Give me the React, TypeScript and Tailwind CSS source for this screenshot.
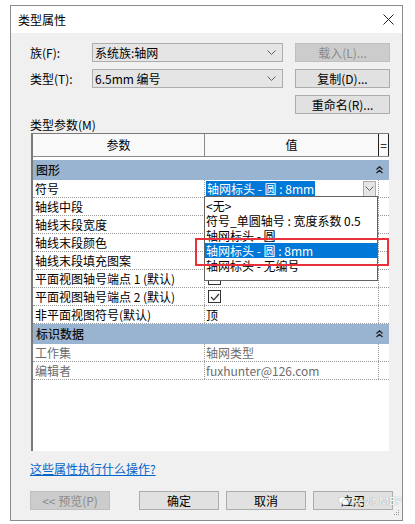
import React from 'react';

const cjk = "font-['Noto_Sans_CJK_SC','Noto_Sans',sans-serif]";

function ChevronDown() {
  return (
    <svg width="9" height="6" viewBox="0 0 9 6" className="text-[#606060]">
      <path d="M0.5 0.5 L4.5 4.5 L8.5 0.5" fill="none" stroke="currentColor" strokeWidth="1" />
    </svg>
  );
}

function DoubleUp() {
  return (
    <svg width="7" height="8" viewBox="0 0 7 8">
      <path d="M0.5 3.5 L3.5 0.8 L6.5 3.5 M0.5 7 L3.5 4.3 L6.5 7" fill="none" stroke="#222" strokeWidth="1.3" />
    </svg>
  );
}

function Combo({ text }: { text: string }) {
  return (
    <div className="w-[191px] h-[19px] bg-[#e5e5e5] border border-[#adadad] flex items-center justify-between pl-[2px] pr-[6px]">
      <span className="text-[12px] text-black leading-none">{text}</span>
      <ChevronDown />
    </div>
  );
}

function Btn({ label, disabled, w = 'w-[95px]' }: { label: string; disabled?: boolean; w?: string }) {
  return (
    <div
      className={`${w} h-[19px] flex items-center justify-center text-[12px] leading-none border ${
        disabled ? 'bg-[#cccccc] border-[#bfbfbf] text-[#8a8a8a]' : 'bg-[#e1e1e1] border-[#adadad] text-black'
      }`}
    >
      {label}
    </div>
  );
}

function Checkbox({ checked }: { checked?: boolean }) {
  return (
    <div className="w-[13px] h-[13px] border border-[#333] bg-white flex items-center justify-center">
      {checked && (
        <svg width="10" height="8" viewBox="0 0 10 8">
          <path d="M1 4 L3.8 6.8 L9 1" fill="none" stroke="#333" strokeWidth="1.2" />
        </svg>
      )}
    </div>
  );
}

function GroupRow({ label }: { label: string }) {
  return (
    <div className="h-[20px] bg-[#99b4d1] flex items-center justify-between pl-[3px] pr-[6px]">
      <span className="text-[12px] text-[#111] font-medium">{label}</span>
      <DoubleUp />
    </div>
  );
}

function Row({ label, children, muted }: { label: string; children?: React.ReactNode; muted?: boolean }) {
  return (
    <div className="h-[18px] flex border-b border-dotted border-[#9a9a9a] bg-white">
      <div className={`w-[172px] shrink-0 border-r border-dotted border-[#9a9a9a] pl-[2px] flex items-center text-[12px] ${muted ? 'text-[#6d6d6d]' : 'text-black'}`}>
        {label}
      </div>
      <div className={`w-[174px] shrink-0 border-r border-dotted border-[#9a9a9a] pl-[1px] flex items-center text-[12px] ${muted ? 'text-[#6d6d6d]' : 'text-black'}`}>
        {children}
      </div>
      <div className="flex-1" />
    </div>
  );
}

const listItems = ['<无>', '符号_单圆轴号 : 宽度系数 0.5', '轴网标头 - 圆', '轴网标头 - 圆 : 8mm', '轴网标头 - 无编号'];

export default function App() {
  return (
    <div className={`w-[415px] h-[524px] bg-white pl-[10px] pt-[5px] ${cjk}`}>
      <div className="w-[393px] h-[516px] border border-[#8c8c8c] bg-[#f0f0f0] flex flex-col relative">
        {/* Title */}
        <div className="h-[27px] bg-white flex items-center justify-between pl-[7px] pr-[8px]">
          <span className="text-[12px] text-black">类型属性</span>
          <svg width="11" height="11" viewBox="0 0 11 11">
            <path d="M0.5 0.5 L10.5 10.5 M10.5 0.5 L0.5 10.5" stroke="#222" strokeWidth="1" />
          </svg>
        </div>

        {/* Family / type */}
        <div className="pl-[19px] pt-[10px] flex flex-col gap-[7px]">
          <div className="flex items-center">
            <span className="w-[62px] text-[12px] text-black">族(F):</span>
            <Combo text="系统族:轴网" />
            <div className="ml-[12px]"><Btn label="载入(L)..." disabled /></div>
          </div>
          <div className="flex items-center">
            <span className="w-[62px] text-[12px] text-black">类型(T):</span>
            <Combo text="6.5mm 编号" />
            <div className="ml-[12px]"><Btn label="复制(D)..." /></div>
          </div>
          <div className="flex justify-end pr-[12px]">
            <Btn label="重命名(R)..." />
          </div>
        </div>

        <div className="pl-[19px] mt-[2px] text-[12px] text-black h-[17px] leading-[17px]">类型参数(M)</div>

        {/* Table */}
        <div className="ml-[20px] w-[358px] h-[318px] bg-white border-l-2 border-t border-[#7a7a7a] relative">
          <div className="h-[23px] flex border-b border-[#8a8a8a] bg-[#f9f9f9]">
            <div className="w-[172px] border-r border-[#8a8a8a] flex items-center justify-center text-[12px] text-black">参数</div>
            <div className="w-[174px] border-r border-[#222] flex items-center justify-center text-[12px] text-black">值</div>
            <div className="flex-1 border-r border-[#222] flex items-center justify-center text-[12px] text-black">=</div>
          </div>
          <div className="h-[3px]" />
          <GroupRow label="图形" />
          <Row label="符号">
            <div className="w-full flex items-center justify-between pr-[2px]">
              <span className="bg-[#0078d7] text-white px-[1px] leading-[16px]">轴网标头 - 圆 : 8mm</span>
              <div className="w-[13px] h-[16px] bg-[#e5e5e5] border border-[#adadad] flex items-center justify-center">
                <ChevronDown />
              </div>
            </div>
          </Row>
          <Row label="轴线中段" />
          <Row label="轴线末段宽度" />
          <Row label="轴线末段颜色" />
          <Row label="轴线末段填充图案" />
          <Row label="平面视图轴号端点 1 (默认)">
            <div className="pl-[2px]"><Checkbox /></div>
          </Row>
          <Row label="平面视图轴号端点 2 (默认)">
            <div className="pl-[2px]"><Checkbox checked /></div>
          </Row>
          <Row label="非平面视图符号(默认)">顶</Row>
          <GroupRow label="标识数据" />
          <Row label="工作集" muted>轴网类型</Row>
          <Row label="编辑者" muted>fuxhunter@126.com</Row>

          {/* Dropdown list */}
          <div className="absolute left-[171px] top-[62px] w-[174px] h-[85px] bg-white border border-[#646464] pt-[1px] flex flex-col">
            {listItems.map((it, i) => (
              <div
                key={it}
                className={`h-[15px] flex items-center pl-[1px] text-[12px] leading-none ${
                  i === 3 ? 'bg-[#0078d7] text-white' : 'text-black'
                }`}
              >
                {it}
              </div>
            ))}
          </div>

          {/* Red highlight */}
          <div className="absolute left-[162px] top-[104px] w-[194px] h-[28px] border-2 border-[#e8313a]" />
        </div>

        {/* Help link */}
        <div className="pl-[19px] mt-[11px] h-[14px] flex items-center">
          <span className="text-[12px] text-[#0066cc] underline leading-none">这些属性执行什么操作?</span>
        </div>

        {/* Buttons */}
        <div className="pl-[19px] mt-[15px] flex items-center">
          <Btn label="<< 预览(P)" disabled w="w-[80px]" />
          <div className="ml-[29px] flex gap-[7px]">
            <Btn label="确定" w="w-[80px]" />
            <Btn label="取消" w="w-[80px]" />
            <Btn label="应用" w="w-[80px]" />
          </div>
        </div>

        {/* Watermark */}
        <div className="absolute left-[327px] top-[489px] flex items-center gap-[2px] whitespace-nowrap pointer-events-none">
          <svg width="11" height="10" viewBox="0 0 11 10" className="shrink-0">
            <ellipse cx="4" cy="4" rx="3.6" ry="3.2" fill="#fff" stroke="#bbb" strokeWidth="0.6" />
            <ellipse cx="7.3" cy="6.2" rx="3.2" ry="2.8" fill="#fff" stroke="#bbb" strokeWidth="0.6" />
          </svg>
          <span className="text-[11px] leading-none text-white font-['Noto_Sans',sans-serif] [text-shadow:0_0_1px_#777]">Revit MEP</span>
        </div>

        {/* Resize grip */}
        <div className="absolute right-[3px] bottom-[3px] w-[7px] h-[7px] flex flex-col items-end gap-[1px]">
          <div className="w-[1px] h-[1px] bg-[#999]" />
          <div className="flex gap-[1px]"><div className="w-[1px] h-[1px] bg-[#999]" /><div className="w-[1px] h-[1px] bg-[#999]" /></div>
          <div className="flex gap-[1px]"><div className="w-[1px] h-[1px] bg-[#999]" /><div className="w-[1px] h-[1px] bg-[#999]" /><div className="w-[1px] h-[1px] bg-[#999]" /></div>
        </div>
      </div>
    </div>
  );
}
